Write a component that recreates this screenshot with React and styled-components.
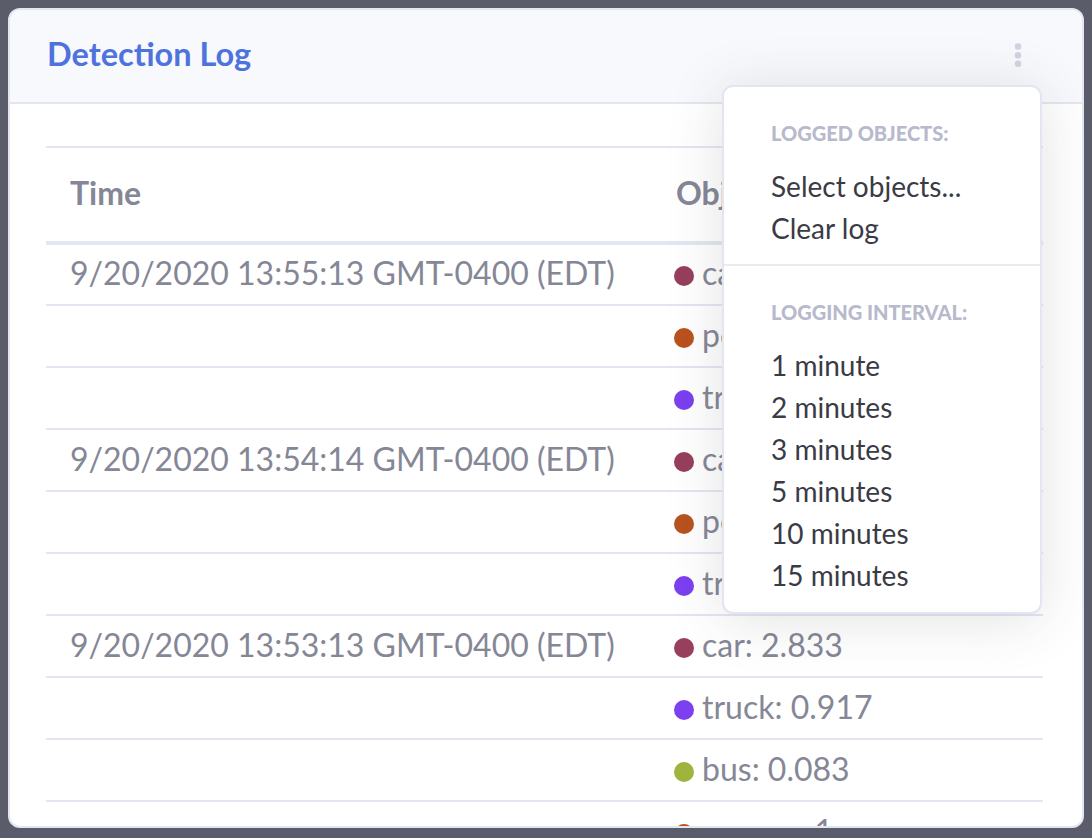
import React from 'react';
import styled, { createGlobalStyle } from 'styled-components';

const GlobalStyle = createGlobalStyle`
  html, body {
    margin: 0;
    padding: 0;
    background: #5a5c69;
  }
  body {
    padding: 8px;
    height: 838px;
    box-sizing: border-box;
    overflow: hidden;
    font-family: 'Lato', 'Open Sans', sans-serif;
  }
`;

const dotColors = {
  car: '#973f5c',
  person: '#b9521f',
  truck: '#7c40f0',
  bus: '#9db53c',
};

const logRows = [
  {
    time: '9/20/2020 13:55:13 GMT-0400 (EDT)',
    objects: [['car', '3.167'], ['person', '1'], ['truck', '0.667']],
  },
  {
    time: '9/20/2020 13:54:14 GMT-0400 (EDT)',
    objects: [['car', '2.5'], ['person', '1'], ['truck', '0.75']],
  },
  {
    time: '9/20/2020 13:53:13 GMT-0400 (EDT)',
    objects: [['car', '2.833'], ['truck', '0.917'], ['bus', '0.083'], ['person', '1']],
  },
];

const intervals = ['1 minute', '2 minutes', '3 minutes', '5 minutes', '10 minutes', '15 minutes'];

export default function App() {
  return (
    <>
      <GlobalStyle />
      <Card>
        <CardHeader>
          <Title>Detection Log</Title>
          <Kebab viewBox="0 0 8 30" aria-label="options">
            <circle cx="4" cy="4" r="3.6" />
            <circle cx="4" cy="13.5" r="3.6" />
            <circle cx="4" cy="23" r="3.6" />
          </Kebab>
        </CardHeader>
        <CardBody>
          <Table>
            <thead>
              <tr>
                <Th>Time</Th>
                <Th>Objects</Th>
              </tr>
            </thead>
            <tbody>
              {logRows.map((row) =>
                row.objects.map(([name, count], i) => (
                  <tr key={row.time + name}>
                    <Td>{i === 0 ? row.time : ''}</Td>
                    <Td>
                      <Dot color={dotColors[name]} />
                      {name}: {count}
                    </Td>
                  </tr>
                ))
              )}
            </tbody>
          </Table>
        </CardBody>

        <Menu>
          <MenuHeader>Logged objects:</MenuHeader>
          <MenuItem>Select objects...</MenuItem>
          <MenuItem>Clear log</MenuItem>
          <Divider />
          <MenuHeader>Logging interval:</MenuHeader>
          {intervals.map((label) => (
            <MenuItem key={label}>{label}</MenuItem>
          ))}
        </Menu>
      </Card>
    </>
  );
}

const Card = styled.div`
  position: relative;
  height: 820px;
  box-sizing: border-box;
  background: #fff;
  border: 2px solid #e3e6f0;
  border-radius: 12px;
  overflow: hidden;
  display: flex;
  flex-direction: column;
`;

const CardHeader = styled.div`
  flex: none;
  height: 92px;
  box-sizing: content-box;
  display: flex;
  align-items: center;
  justify-content: space-between;
  padding: 0 60px 0 37px;
  background: #f8f9fc;
  border-bottom: 2px solid #e3e6f0;
`;

const Title = styled.h6`
  margin: 0 0 6px;
  font-size: 32.5px;
  font-weight: 700;
  color: #4e73df;
`;

const Kebab = styled.svg`
  width: 8px;
  height: 27px;
  fill: #d1d3e2;
`;

const CardBody = styled.div`
  flex: 1;
  padding: 42px 39px 0 36px;
  overflow: hidden;
`;

const Table = styled.table`
  width: 100%;
  border-collapse: collapse;
  color: #858796;
  font-size: 32px;
  table-layout: fixed;

  th:first-child, td:first-child {
    width: 606px;
  }
`;

const Th = styled.th`
  box-sizing: border-box;
  height: 96px;
  padding: 0 24px 5px;
  text-align: left;
  font-weight: 700;
  border-top: 2px solid #e3e6f0;
  border-bottom: 4px solid #e3e6f0;
  white-space: nowrap;
  overflow: hidden;
`;

const Td = styled.td`
  box-sizing: border-box;
  height: 62px;
  padding: 0 24px 4px;
  border-bottom: 2px solid #e3e6f0;
  white-space: nowrap;
  vertical-align: middle;

  &:last-child {
    padding-left: 22px;
  }
`;

const Dot = styled.span`
  display: inline-block;
  width: 20px;
  height: 20px;
  border-radius: 50%;
  background: ${(p) => p.color};
  margin-right: 8px;
  vertical-align: -1px;
`;

const Menu = styled.div`
  position: absolute;
  top: 75px;
  right: 40px;
  width: 320px;
  box-sizing: border-box;
  padding: 15px 0 16px;
  background: #fff;
  border: 2px solid #e3e6f0;
  border-radius: 11px;
  box-shadow: 0 5px 56px rgba(58, 59, 69, 0.15);
`;

const MenuHeader = styled.div`
  padding: 16px 47px;
  line-height: 31px;
  font-size: 20px;
  font-weight: 900;
  text-transform: uppercase;
  color: #b7b9cc;
`;

const MenuItem = styled.div`
  padding: 8px 47px;
  line-height: 26px;
  font-size: 28px;
  color: #3a3b45;
  white-space: nowrap;
  cursor: pointer;
`;

const Divider = styled.div`
  height: 2px;
  margin: 15px 0;
  background: #e9ecef;
`;
